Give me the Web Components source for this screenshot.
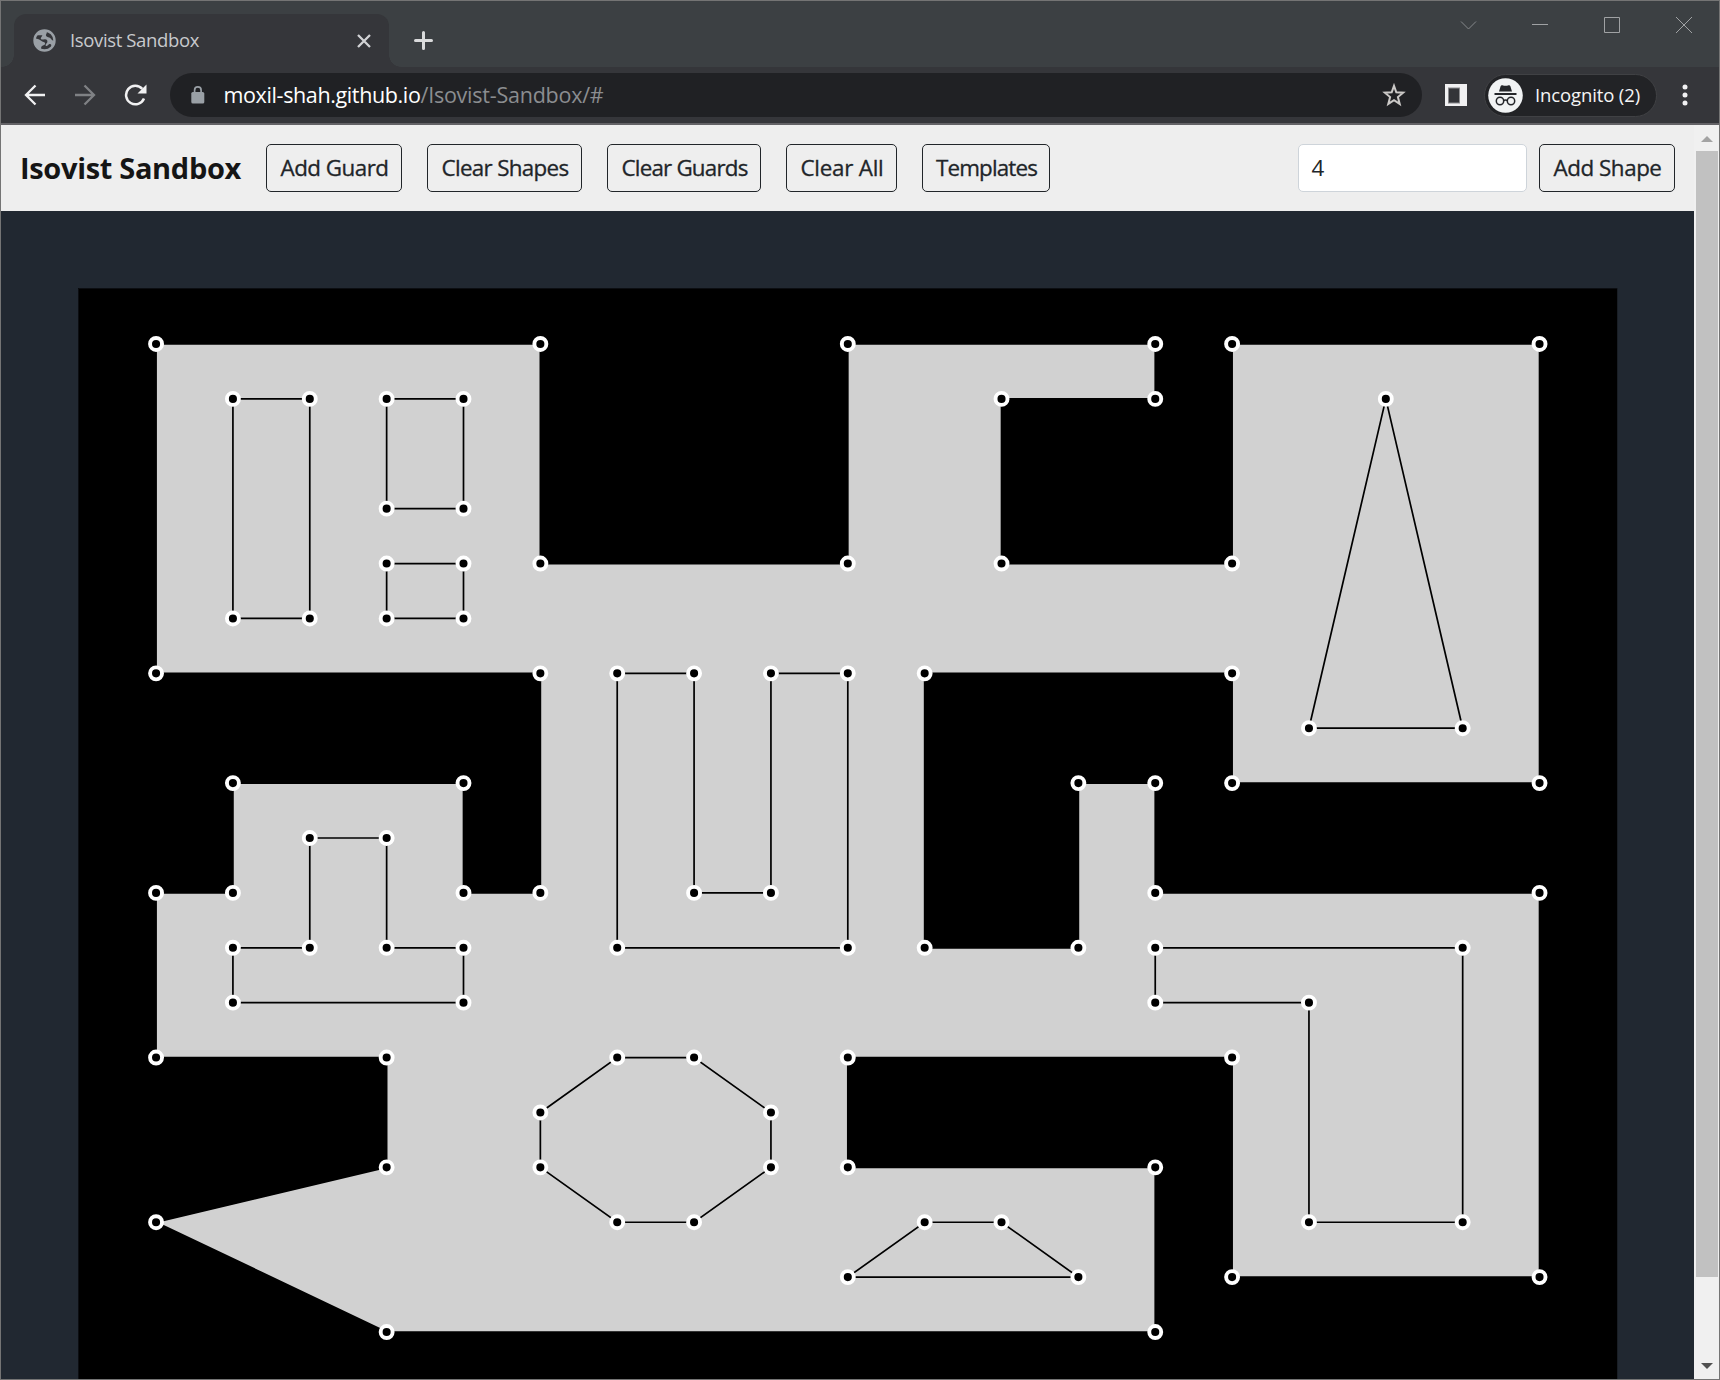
<!DOCTYPE html>
<html lang="en">
<head>
<meta charset="utf-8">
<title>Isovist Sandbox</title>
<style>
  html, body { margin: 0; height: 100%; overflow: hidden; }
  body { font-family: "Open Sans", "Noto Sans", sans-serif; }
</style>
</head>
<body>
<browser-window>
  <tab-strip slot="tabs">Isovist Sandbox</tab-strip>
  <address-bar slot="toolbar"></address-bar>
  <sandbox-nav slot="page"></sandbox-nav>
  <sandbox-board slot="page"></sandbox-board>
  <scroll-bar slot="scroll"></scroll-bar>
</browser-window>

<script>
function define(name, html, setup) {
  customElements.define(name, class extends HTMLElement {
    constructor() {
      super();
      const root = this.attachShadow({ mode: 'open' });
      const t = document.createElement('template');
      t.innerHTML = html;
      root.appendChild(t.content.cloneNode(true));
    }
    connectedCallback() { if (setup) setup(this, this.shadowRoot); }
  });
}

/* Text run whose tracking is adjusted so that it takes the given width. */
define('fit-text', `<style>:host{display:block;white-space:nowrap;line-height:1}span{display:inline-block;vertical-align:top}</style><span><slot></slot></span>`, (host, root) => {
  const w = parseFloat(host.getAttribute('w'));
  const span = root.querySelector('span');
  const natural = span.getBoundingClientRect().width;
  span.style.letterSpacing = ((w - natural) / host.textContent.length) + 'px';
  host.style.width = w + 'px';
});

define('browser-window', `
<style>
:host{display:flex;flex-direction:column;box-sizing:border-box;width:1720px;height:1380px;border:1px solid #747474;background:#35363a;overflow:hidden}
.tools{border-bottom:2px solid #636266}
.view{flex:1;display:flex;min-height:0}
.page{flex:1;display:flex;flex-direction:column;background:#212831;overflow:hidden;min-width:0}
</style>
<slot name="tabs"></slot>
<div class="tools"><slot name="toolbar"></slot></div>
<div class="view"><div class="page"><slot name="page"></slot></div><slot name="scroll"></slot></div>`);

define('tab-strip', `
<style>
:host{display:flex;height:66px;background:#3c4043;box-sizing:border-box;padding-left:13px}
.tab{position:relative;display:flex;align-items:center;width:375px;height:53px;margin-top:13px;background:#35363a;border-radius:12px 12px 0 0;box-sizing:border-box;padding:0 13px 0 19px}
.tab::before,.tab::after{content:"";position:absolute;bottom:0;width:12px;height:12px}
.tab::before{left:-12px;background:radial-gradient(circle at 0 0,transparent 11.5px,#35363a 12px)}
.tab::after{right:-12px;background:radial-gradient(circle at 100% 0,transparent 11.5px,#35363a 12px)}
fit-text{font-size:18.5px;color:#c8cacd;margin-left:14px;flex:none}
.close{margin-left:auto;margin-right:5.500px}
.plus{margin:30px 0 0 24.500px}
.controls{display:flex;margin-left:auto;padding:14px 25px 0 0;gap:52px}
svg{display:block;flex:none}
</style>
<div class="tab">
 <svg width="23" height="23" viewBox="0 0 23 23"><circle cx="11.5" cy="11.5" r="10" fill="none" stroke="#9aa0a6" stroke-width="2.4"/><path fill="#9aa0a6" d="M13.500 1.500C10 .5 6 1.500 3.200 4.600 2.800 6 3.200 6.200 4.700 6.200H9.400C8.600 8 7.600 8.400 7.800 9.800 8 11 10 10.200 12 10.200c2.200 0 2.700 1.300 2.300 3.100-.3 1.300-1.600 1-1.600 2.500v1.300c2.800-.4 2.600-2.200 4.200-2.200 1.700 0 1.500 1.500 1.600 3.200C21 16 22 13.800 22 11.500c-1.800.2-3.200 0-4.100-1.700C17 8 13.500 8.500 13 6.500c-.3-1.500 1.700-2.300.5-5z"/><path fill="#9aa0a6" d="M1.300 9.500C5 9.400 6.300 10.600 8.500 12c2 1.200 4 1 3.600 3-.3 1.400-2.600 1.400-3.600 2.500-.8 1 .2 2.700-.6 3.700C3.500 19.800.5 15 1.300 9.500z"/></svg>
 <fit-text w="129"></fit-text>
 <svg class="close" width="14" height="14" viewBox="0 0 14 14" stroke="#d2d3d5" stroke-width="2.300"><path d="M1 1L13 13M13 1L1 13"/></svg>
</div>
<svg class="plus" width="19" height="19" viewBox="0 0 19 19" stroke="#dadbdc" stroke-width="3" stroke-linecap="round"><path d="M9.500 1.500V17.500M1.500 9.500H17.500"/></svg>
<div class="controls">
 <svg width="20" height="20" viewBox="0 0 20 20" fill="none" stroke="#85888b"><path d="M3 6.500l7.500 7.500L18 6.500"/></svg>
 <svg width="20" height="20" viewBox="0 0 20 20" fill="none" stroke="#a0a2a4"><path d="M2 9.500H18"/></svg>
 <svg width="20" height="20" viewBox="0 0 20 20" fill="none" stroke="#a0a2a4"><path d="M2.500 2.500H17.500V17.500H2.500z"/></svg>
 <svg width="20" height="20" viewBox="0 0 20 20" fill="none" stroke="#a0a2a4"><path d="M2 2L18 18M18 2L2 18"/></svg>
</div>`, (host, root) => {
  const t = root.querySelector('fit-text');
  t.textContent = host.textContent;
  customElements.upgrade(t);
  const s = t.shadowRoot.querySelector('span');
  s.style.letterSpacing = '0';
  s.style.letterSpacing = ((129 - s.getBoundingClientRect().width) / t.textContent.length) + 'px';
});

define('address-bar', `
<style>
:host{display:flex;align-items:center;height:56px;background:#35363a}
svg{display:block;flex:none}
.nav{display:flex;gap:28px;width:169px;box-sizing:border-box;padding-left:23px}
.url{display:flex;align-items:center;width:1252px;height:44px;border-radius:22px;background:#202124;box-sizing:border-box;padding:0 16.500px 0 21px}
.url fit-text{font-size:21.5px;color:#fff}
.url .path{color:#8b8d90}
.lock{margin-right:18.500px}
.star{margin-left:auto}
.panel{margin-left:22.500px}
.chip{display:flex;align-items:center;box-sizing:border-box;width:173px;height:43px;border:1px solid #404144;border-radius:22px;background:#222326;margin-left:17px;padding-left:3px}
.chip fit-text{font-size:18.500px;color:#f5f5f5;margin-left:12.500px}
.dots{margin-left:25.500px}
</style>
<div class="nav">
 <svg width="22" height="22" viewBox="0 0 22 22" fill="none" stroke="#f1f1f2" stroke-width="2.300"><path d="M21 11H2.500M11.500 1.500L2 11l9.500 9.500"/></svg>
 <svg width="22" height="22" viewBox="0 0 22 22" fill="none" stroke="#7f8184" stroke-width="2.300"><path d="M1 11H19.500M10.500 1.500L20 11l-9.500 9.500"/></svg>
 <svg width="24" height="22" viewBox="0 0 24 22" fill="none" stroke="#f1f1f2" stroke-width="2.500"><path d="M20 14.500A9.300 9.300 0 1 1 18.300 4.800"/><path d="M22.500.5V9.500H13.500z" fill="#f1f1f2" stroke="none"/></svg>
</div>
<div class="url">
 <svg class="lock" width="14" height="18" viewBox="0 0 14 18"><rect x=".3" y="6" width="13" height="11.500" rx="1.600" fill="#9aa0a6"/><path d="M3.600 7V4.200a3.200 3.200 0 0 1 6.500 0V7" fill="none" stroke="#9aa0a6" stroke-width="1.700"/></svg>
 <fit-text w="197">moxil-shah.github.io</fit-text><fit-text class="path" w="183">/Isovist-Sandbox/#</fit-text>
 <svg class="star" width="24" height="24" viewBox="0 0 24 24" fill="none" stroke="#cbc9c7" stroke-width="2"><path d="M12 2.800l2.300 6.500 6.900.4-5.300 4.400 1.800 6.800-5.700-3.800-5.700 3.800 1.800-6.800L2.800 9.700l6.900-.4z"/></svg>
</div>
<svg class="panel" width="22" height="22" viewBox="0 0 22 22"><rect width="22" height="22" fill="#f1f1f2"/><rect x="3.500" y="4" width="11" height="15" fill="#333438" stroke="#8b8b8e"/></svg>
<div class="chip">
 <svg width="35" height="35" viewBox="0 0 35 35"><circle cx="17.500" cy="17.500" r="17.300" fill="#f1f3f4"/><path fill="#24262a" d="M14.500 7.300q3 1 6 0 1.500-.3 1.900 1l1.600 5.200H11l1.600-5.200q.4-1.300 1.900-1zM6.500 15h22v1.900h-22z"/><g fill="none" stroke="#24262a" stroke-width="1.500"><circle cx="12" cy="23" r="3.700"/><circle cx="23" cy="23" r="3.700"/><path d="M15.500 22.500q2-1.200 4 0"/></g></svg>
 <fit-text w="105">Incognito (2)</fit-text>
</div>
<svg class="dots" width="6" height="22" viewBox="0 0 6 22" fill="#f1f1f2"><circle cx="3" cy="3" r="2.500"/><circle cx="3" cy="11" r="2.500"/><circle cx="3" cy="19" r="2.500"/></svg>`);

define('nav-button', `
<style>
:host{display:flex;align-items:center;justify-content:center;box-sizing:border-box;height:48px;border:1.500px solid #212529;border-radius:5px;padding-left:1px;font-size:22.400px;color:#212529;flex:none;-webkit-text-stroke:.3px #212529}
</style><slot></slot>`);

define('sandbox-nav', `
<style>
:host{display:flex;align-items:center;height:86px;box-sizing:border-box;background:#eee;padding:0 19px 0 19px;flex:none}
h1{margin:0 25px 2px 0;font-size:29px;font-weight:700;color:#151515;width:221px}
.row{display:flex;gap:25px}
.add{display:flex;gap:12px;margin-left:auto}
.num{box-sizing:border-box;width:229px;height:48px;background:#fff;border:1px solid #ced4da;border-radius:5px;display:flex;align-items:center;padding-left:12.500px;font-size:22.400px;color:#212529}
</style>
<h1><fit-text w="221">Isovist Sandbox</fit-text></h1>
<div class="row">
 <nav-button style="width:136px"><fit-text w="108">Add Guard</fit-text></nav-button>
 <nav-button style="width:155px"><fit-text w="127">Clear Shapes</fit-text></nav-button>
 <nav-button style="width:154px"><fit-text w="126">Clear Guards</fit-text></nav-button>
 <nav-button style="width:111px"><fit-text w="83">Clear All</fit-text></nav-button>
 <nav-button style="width:128px"><fit-text w="101">Templates</fit-text></nav-button>
</div>
<div class="add"><div class="num"><fit-text w="12">4</fit-text></div><nav-button style="width:136px"><fit-text w="108">Add Shape</fit-text></nav-button></div>`);

define('sandbox-board', `
<style>:host{display:block;margin:77px 76px 0 77px;flex:none;height:1100px;background:#000}svg{display:block}</style>
<svg width="1540" height="1100" viewBox="78 288 1540 1100"></svg>`, (host, root) => {
  const X = c => +(79.2 + 76.86 * c).toFixed(2), Y = r => +(289.1 + 54.89 * r).toFixed(2);
  const shapes = [
    '1,1 6,1 6,5 10,5 10,1 14,1 14,2 12,2 12,5 15,5 15,1 19,1 19,9 15,9 15,7 11,7 11,12 13,12 13,9 14,9 14,11 19,11 19,18 15,18 15,14 10,14 10,16 14,16 14,19 4,19 1,17 4,16 4,14 1,14 1,11 2,11 2,9 5,9 5,11 6,11 6,7 1,7',
    '2,2 3,2 3,6 2,6', '4,2 5,2 5,4 4,4', '4,5 5,5 5,6 4,6',
    '17,2 18,8 16,8',
    '7,7 8,7 8,11 9,11 9,7 10,7 10,12 7,12',
    '3,10 4,10 4,12 5,12 5,13 2,13 2,12 3,12',
    '14,12 18,12 18,17 16,17 16,13 14,13',
    '7,14 8,14 9,15 9,16 8,17 7,17 6,16 6,15',
    '11,17 12,17 13,18 10,18'
  ].map(s => s.split(' ').map(p => { const [c, r] = p.split(','); return [X(c), Y(r)]; }));
  root.querySelector('svg').innerHTML =
    '<path d="M78.500 1400V288.500H1617.500" fill="none" stroke="#0c0e12"/><path d="M1617.500 288V1400" stroke="#191e25"/>' +
    shapes.map(s => `<polygon points="${s.map(p => p.join()).join(' ')}" fill="#d1d1d1" stroke="#000" stroke-width="1.700"/>`).join('') +
    shapes.flat().map(([x, y]) => `<circle cx="${x}" cy="${y}" r="6" fill="#000" stroke="#fff" stroke-width="3.900"/>`).join('');
});

define('scroll-bar', `
<style>
:host{display:flex;flex-direction:column;align-items:center;justify-content:space-between;width:25px;background:#f0f0f0;box-sizing:border-box;padding:11px 0 10px}
.thumb{width:22px;height:1126px;background:#c1c1c1;margin:9px 0 auto 1px}
svg{display:block;margin-left:1px}
</style>
<svg width="12" height="6"><path d="M0 6L6 0L12 6z" fill="#a3a3a3"/></svg>
<div class="thumb"></div>
<svg width="12" height="6"><path d="M0 0H12L6 6z" fill="#505050"/></svg>`);
</script>
</body>
</html>
